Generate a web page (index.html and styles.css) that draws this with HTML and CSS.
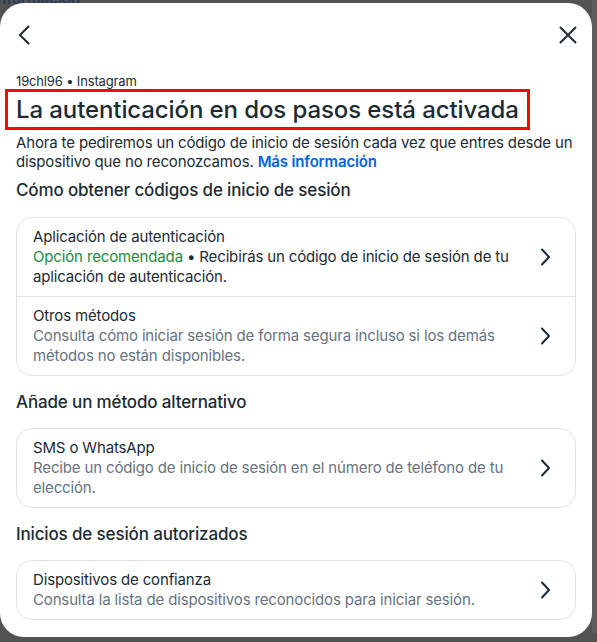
FILE: index.html
```html
<!DOCTYPE html>
<html lang="es">
<head>
<meta charset="utf-8">
<title>Autenticación en dos pasos</title>
<link rel="stylesheet" href="styles.css">
</head>
<body>
<div class="underlay">
  <p class="underlink">nformación</p>
</div>

<div class="modal">
  <div class="topbar">
    <button class="iconbtn" type="button" aria-label="Atrás">
      <svg width="24" height="24" viewBox="0 0 24 24"><path d="M16.5 3.5 L8 12 L16.5 20.5" fill="none" stroke="#1c2b33" stroke-width="2" stroke-linecap="round" stroke-linejoin="round"/></svg>
    </button>
    <button class="iconbtn" type="button" aria-label="Cerrar">
      <svg width="24" height="24" viewBox="0 0 24 24"><path d="M4.5 4.5 L19.5 19.5 M19.5 4.5 L4.5 19.5" fill="none" stroke="#1c2b33" stroke-width="2" stroke-linecap="round"/></svg>
    </button>
  </div>

  <p class="account">19chl96 • Instagram</p>
  <h1 class="title">La autenticación en dos pasos está activada</h1>
  <p class="intro">Ahora te pediremos un código de inicio de sesión cada vez que entres desde un dispositivo que no reconozcamos. <a href="#">Más información</a></p>

  <h2 class="section">Cómo obtener códigos de inicio de sesión</h2>
  <div class="card">
    <a class="row" href="#">
      <div class="rowtext">
        <div class="rowtitle">Aplicación de autenticación</div>
        <div class="rowdesc dark"><span class="green">Opción recomendada</span> • Recibirás un código de inicio de sesión de tu aplicación de autenticación.</div>
      </div>
      <svg class="chev" width="12" height="18" viewBox="0 0 12 18"><path d="M3 1.5 L10 9 L3 16.5" fill="none" stroke="#1c2b33" stroke-width="2" stroke-linecap="round" stroke-linejoin="round"/></svg>
    </a>
    <a class="row" href="#">
      <div class="rowtext">
        <div class="rowtitle">Otros métodos</div>
        <div class="rowdesc">Consulta cómo iniciar sesión de forma segura incluso si los demás métodos no están disponibles.</div>
      </div>
      <svg class="chev" width="12" height="18" viewBox="0 0 12 18"><path d="M3 1.5 L10 9 L3 16.5" fill="none" stroke="#1c2b33" stroke-width="2" stroke-linecap="round" stroke-linejoin="round"/></svg>
    </a>
  </div>

  <h2 class="section">Añade un método alternativo</h2>
  <div class="card">
    <a class="row" href="#">
      <div class="rowtext">
        <div class="rowtitle">SMS o WhatsApp</div>
        <div class="rowdesc">Recibe un código de inicio de sesión en el número de teléfono de tu elección.</div>
      </div>
      <svg class="chev" width="12" height="18" viewBox="0 0 12 18"><path d="M3 1.5 L10 9 L3 16.5" fill="none" stroke="#1c2b33" stroke-width="2" stroke-linecap="round" stroke-linejoin="round"/></svg>
    </a>
  </div>

  <h2 class="section">Inicios de sesión autorizados</h2>
  <div class="card">
    <a class="row" href="#">
      <div class="rowtext">
        <div class="rowtitle">Dispositivos de confianza</div>
        <div class="rowdesc">Consulta la lista de dispositivos reconocidos para iniciar sesión.</div>
      </div>
      <svg class="chev" width="12" height="18" viewBox="0 0 12 18"><path d="M3 1.5 L10 9 L3 16.5" fill="none" stroke="#1c2b33" stroke-width="2" stroke-linecap="round" stroke-linejoin="round"/></svg>
    </a>
  </div>
</div>
</body>
</html>
```

FILE: styles.css
```css
body {
  margin: 0;
  background-color: #525252;
  font-family: Inter, "Noto Sans", sans-serif;
  color: #1c2b33;
  height: 642px;
  overflow: hidden;
}

.underlay {
  height: 642px;
  border-right: 5px solid #5e5e5e;
  box-sizing: border-box;
}
.underlink {
  margin: 0;
  margin-top: -9px;
  margin-left: -3px;
  font-size: 15px;
  line-height: 15px;
  font-weight: 600;
  color: #243a5c;
}

.modal {
  position: absolute;
  top: 3px;
  left: 0;
  width: 592px;
  height: 634px;
  background-color: #fff;
  border-radius: 24px;
  padding: 0 16px;
  box-sizing: border-box;
  overflow: hidden;
  letter-spacing: -0.15px;
}

.topbar {
  height: 64px;
  margin: 0 -4px;
  display: flex;
  align-items: center;
  justify-content: space-between;
}
.iconbtn {
  width: 24px;
  height: 24px;
  padding: 0;
  border: none;
  background: none;
  display: flex;
}

.account {
  margin: 6px 0 0;
  font-size: 13px;
  line-height: 16px;
}

.title {
  display: block;
  width: max-content;
  margin: 0 0 0 -11px;
  padding: 5px 8px;
  border: 3px solid #ee0d0d;
  font-size: 24px;
  line-height: 25px;
  font-weight: 500;
  letter-spacing: -0.1px;
  white-space: nowrap;
}

.intro {
  margin: 3px 0 0;
  font-size: 15px;
  line-height: 19px;
}
.intro a {
  color: #0064e0;
  font-weight: 600;
  text-decoration: none;
}

.section {
  margin: 15px 0 15px;
  font-size: 17px;
  line-height: 22px;
  font-weight: 500;
}
.intro + .section {
  margin-top: 8px;
  margin-bottom: 16px;
}

.card {
  border: 1px solid #dde1e6;
  border-radius: 16px;
}
.row {
  display: flex;
  align-items: center;
  padding: 9px 24px 9px 16px;
  text-decoration: none;
  color: inherit;
}
.row + .row {
  border-top: 1px solid #dde1e6;
}
.rowtext {
  flex: 1;
  padding-right: 22px;
}
.rowtitle {
  font-size: 15px;
  line-height: 20px;
}
.rowdesc {
  font-size: 15px;
  line-height: 20px;
  color: #66737f;
}
.rowdesc.dark { color: #1c2b33; }
.green { color: #1d8a3a; }
.chev { flex: none; }
```
